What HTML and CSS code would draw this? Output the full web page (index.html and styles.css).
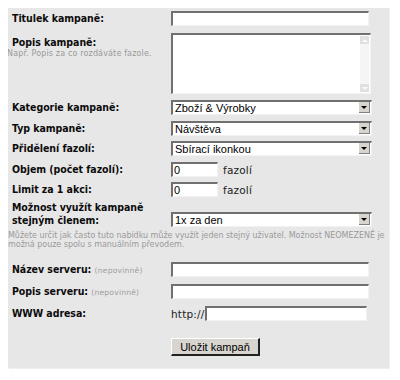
FILE: index.html
```html
<!DOCTYPE html>
<html lang="cs">
<head>
<meta charset="utf-8">
<link rel="stylesheet" href="styles.css">
</head>
<body>
<form class="panel">
  <div class="row r1">
    <label class="lbl">Titulek kampaně:</label>
    <input class="field wide" type="text">
  </div>
  <div class="row r2 top">
    <div class="lbl">Popis kampaně:<div class="hint">Např. Popis za co rozdáváte fazole.</div></div>
    <div class="textarea"><span class="ta-body"></span><span class="sb"><span class="sb-btn"><span class="tri up"></span></span><span class="sb-btn"><span class="tri down"></span></span></span></div>
  </div>
  <div class="row r3">
    <label class="lbl">Kategorie kampaně:</label>
    <div class="select"><span class="val">Zboží &amp; Výrobky</span><span class="arrow"><span class="tri dn"></span></span></div>
  </div>
  <div class="row r4">
    <label class="lbl">Typ kampaně:</label>
    <div class="select"><span class="val">Návštěva</span><span class="arrow"><span class="tri dn"></span></span></div>
  </div>
  <div class="row r5">
    <label class="lbl">Přidělení fazolí:</label>
    <div class="select"><span class="val">Sbírací ikonkou</span><span class="arrow"><span class="tri dn"></span></span></div>
  </div>
  <div class="row r6">
    <label class="lbl">Objem (počet fazolí):</label>
    <div class="unit"><input class="field small" type="text" value="0"><span class="utext">fazolí</span></div>
  </div>
  <div class="row r7">
    <label class="lbl">Limit za 1 akci:</label>
    <div class="unit"><input class="field small" type="text" value="0"><span class="utext">fazolí</span></div>
  </div>
  <div class="row r8">
    <label class="lbl two">Možnost využít kampaně stejným členem:</label>
    <div class="select"><span class="val">1x za den</span><span class="arrow"><span class="tri dn"></span></span></div>
  </div>
  <p class="hint long">Můžete určit jak často tuto nabídku může využít jeden stejný uživatel. Možnost NEOMEZENÉ je<br>možná pouze spolu s manuálním převodem.</p>
  <div class="row r9">
    <label class="lbl">Název serveru: <span class="opt">(nepovinně)</span></label>
    <input class="field wide" type="text">
  </div>
  <div class="row r10">
    <label class="lbl">Popis serveru: <span class="opt">(nepovinně)</span></label>
    <input class="field wide" type="text">
  </div>
  <div class="row r11">
    <label class="lbl">WWW adresa:</label>
    <div class="url"><span class="utext http">http://</span><input class="field urlin" type="text"></div>
  </div>
  <div class="row r12">
    <span></span>
    <button class="btn" type="button">Uložit kampaň</button>
  </div>
</form>
</body>
</html>
```

FILE: styles.css
```css
body {
  margin: 8px;
  font-family: "DejaVu Sans", Verdana, sans-serif;
}
.panel {
  box-sizing: border-box;
  width: 382px;
  height: 361px;
  margin: 0;
  padding-top: 3px;
  background: #e7e7e7;
  border-right: 1px dotted #f6f6f6;
  border-bottom: 1px dotted #f6f6f6;
}
.row {
  display: grid;
  grid-template-columns: 163px auto;
  align-items: center;
  height: 15px;
}
.row.top { align-items: start; }
.lbl {
  padding-left: 4px;
  font-family: "DejaVu Sans Condensed", "DejaVu Sans", sans-serif;
  font-size: 10.5px;
  font-weight: bold;
  color: #0c0c0c;
  line-height: 13px;
  white-space: nowrap;
  letter-spacing: -0.05px;
}
.r2 .lbl { padding-left: 0; text-indent: 4px; }
.hint {
  font-family: "DejaVu Sans", Verdana, sans-serif;
  font-size: 8px;
  font-weight: normal;
  color: #9a9a9a;
  line-height: 10px;
  text-indent: 0;
  margin-left: -1px;
  letter-spacing: 0.15px;
  white-space: nowrap;
}
.r2 { margin-top: 7px; height: 61px; }
.r2 .lbl { margin-top: 3px; }
.r3 { margin-top: 6px; }
.r4 { margin-top: 6px; }
.r5 { margin-top: 5px; }
.r6 { margin-top: 6px; }
.r7 { margin-top: 5px; }
.r8 { margin-top: 4px; height: 26px; align-items: end; }
.r8 .lbl { white-space: normal; align-self: start; }
.hint.long {
  margin: 4px 0 0 0;
  line-height: 9px;
  letter-spacing: -0.03px;
}
.r9 { margin-top: 13px; }
.r10 { margin-top: 7px; }
.r11 { margin-top: 7px; }
.r12 { margin-top: 17px; height: 18px; }
.opt {
  font-family: "DejaVu Sans", Verdana, sans-serif;
  font-size: 7.6px;
  font-weight: normal;
  color: #a0a0a0;
  letter-spacing: 0.2px;
}
.field {
  box-sizing: border-box;
  height: 15px;
  margin: 0;
  padding: 0 2px;
  background: #fff;
  border-top: 2px solid #707070;
  border-left: 2px solid #707070;
  border-right: 1px solid #f2f2f2;
  border-bottom: 1px solid #f2f2f2;
  outline: none;
  font-family: "Liberation Sans", Arial, sans-serif;
  font-size: 11px;
  color: #000;
}
.wide { width: 198px; }
.small { width: 47px; padding: 0 1px; }
.unit, .url { display: flex; align-items: center; }
.utext {
  font-size: 10.5px;
  color: #222;
  margin-left: 5px;
  letter-spacing: 0.2px;
}
.utext.http { margin-left: 0; }
.urlin { width: 162px; }
.textarea {
  box-sizing: border-box;
  display: flex;
  width: 200px;
  height: 61px;
  background: #fff;
  border-top: 2px solid #707070;
  border-left: 2px solid #707070;
  border-right: 1px solid #f2f2f2;
  border-bottom: 1px solid #f2f2f2;
}
.ta-body { flex: 1; }
.sb {
  display: flex;
  flex-direction: column;
  justify-content: space-between;
  width: 9px;
  margin: 1px 1px 1px 0;
  background: #f5f5f5;
}
.sb-btn {
  display: flex;
  align-items: center;
  justify-content: center;
  height: 8px;
  background: #e0e0e0;
}
.tri {
  width: 0;
  height: 0;
  border-left: 3px solid transparent;
  border-right: 3px solid transparent;
}
.tri.up { border-bottom: 3px solid #fafafa; }
.tri.down { border-top: 3px solid #fafafa; }
.tri.dn { border-top: 3px solid #000; }
.select {
  box-sizing: border-box;
  display: flex;
  width: 201px;
  height: 15px;
  background: #fff;
  border-top: 2px solid #707070;
  border-left: 2px solid #707070;
  border-right: 1px solid #f2f2f2;
  border-bottom: 1px solid #f2f2f2;
}
.val {
  flex: 1;
  padding-left: 2px;
  font-family: "Liberation Sans", Arial, sans-serif;
  font-size: 11px;
  line-height: 12px;
  color: #000;
}
.arrow {
  display: flex;
  align-items: center;
  justify-content: center;
  width: 10px;
  margin: 0 1px 1px 0;
  background: #d8d5cf;
  border-right: 1px solid #808080;
  border-bottom: 1px solid #808080;
}
.btn {
  box-sizing: border-box;
  width: 89px;
  height: 18px;
  padding: 0;
  background: #d8d5d0;
  border-top: 1px solid #fff;
  border-left: 1px solid #fff;
  border-right: 2px solid #222;
  border-bottom: 2px solid #222;
  font-family: "Liberation Sans", Arial, sans-serif;
  font-size: 11px;
  color: #000;
}
```
